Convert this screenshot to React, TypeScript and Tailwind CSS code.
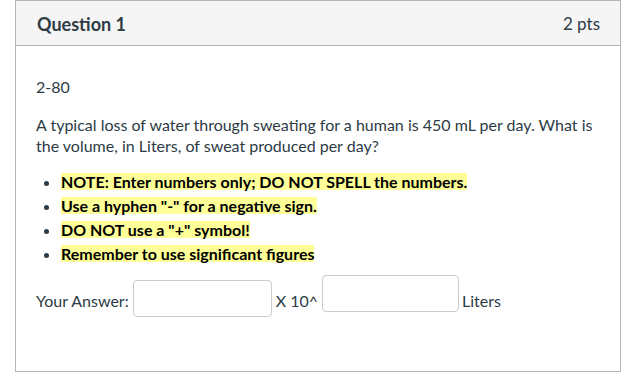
import React from "react";

export default function App() {
  const bullets = [
    "NOTE: Enter numbers only; DO NOT SPELL the numbers.",
    'Use a hyphen "-" for a negative sign.',
    'DO NOT use a "+" symbol!',
    "Remember to use significant figures",
  ];
  return (
    <div
      className="w-[635px] h-[379px] bg-white overflow-hidden"
      style={{ fontFamily: "Lato, 'Liberation Sans', sans-serif" }}
    >
      <div className="ml-[15px] w-[606px] h-[372px] border border-[#b3b6b9] bg-white text-[#2d3b45]">
        <div className="h-[45px] bg-[#f5f5f5] border-b border-[#b3b6b9] flex items-center justify-between pl-[21px] pr-[20px] pt-[2px]">
          <span className="text-[18px] font-bold leading-[24px]">Question 1</span>
          <span className="text-[17px] leading-[24px] text-[#2d3b45]">2 pts</span>
        </div>
        <div className="pl-[20px] pr-[20px] pt-[30px]">
          <p className="text-[16px] leading-[21px]">2-80</p>
          <p className="text-[16px] leading-[21px] mt-[17px]">
            A typical loss of water through sweating for a human is 450 mL per day. What is the volume, in Liters, of sweat produced per day?
          </p>
          <ul className="list-disc pl-[25px] mt-[14px] text-[16px] leading-[24px]">
            {bullets.map((b) => (
              <li key={b}>
                <span className="inline-block leading-[17px] bg-[#ffff99] font-bold text-black">{b}</span>
              </li>
            ))}
          </ul>
          <div className="flex items-start mt-[9px] text-[16px] leading-[24px]">
            <span className="mt-[14px]">Your Answer:</span>
            <div className="ml-[4px] mt-[5px] w-[139px] h-[37px] border border-[#c7cdd1] rounded-[4px] bg-white" />
            <span className="ml-[4px] mt-[14px]">X 10^</span>
            <div className="ml-[4px] w-[137px] h-[37px] border border-[#c7cdd1] rounded-[4px] bg-white" />
            <span className="ml-[3px] mt-[14px]">Liters</span>
          </div>
        </div>
      </div>
    </div>
  );
}
